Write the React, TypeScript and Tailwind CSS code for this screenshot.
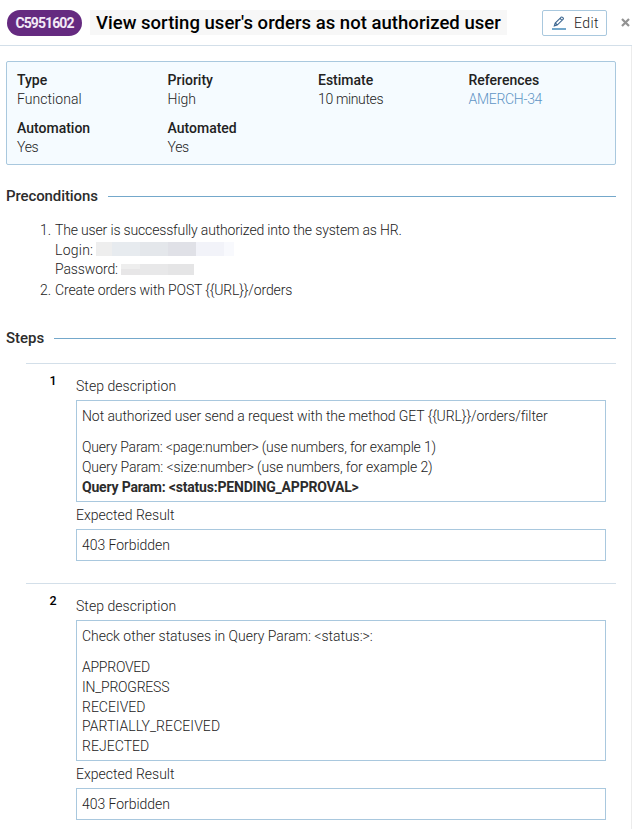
import type { ReactNode } from "react";

function Field({ label, value, link, valueClass }: { label: string; value: string; link?: boolean; valueClass: string }) {
  return (
    <div className="h-12 whitespace-nowrap">
      <div className="h-5 leading-5 font-medium">{label}</div>
      <div className={link ? "h-5 leading-[19px] text-[#5f95c5]" : "h-5 leading-[19px]"}><span className={valueClass}>{value}</span></div>
    </div>
  );
}

function Heading({ children }: { children: ReactNode }) {
  return (
    <h2 className="flex h-5 items-center gap-[10px] text-[15px] leading-5 font-medium whitespace-nowrap text-[#2c2c2c]">
      {children}
      <span className="h-px flex-1 bg-[#74a8cb]" />
    </h2>
  );
}

function Step({ number, children }: { number: string; children: ReactNode }) {
  return (
    <section className="ml-[26px] flex h-[220px] w-[590px] border-t border-[#d3dfe9]">
      <div className="w-[50px] pt-[9px] pl-[23.5px] text-[12.5px] leading-4 font-medium text-black">{number}</div>
      <div className="w-[530px] pt-3">
        <div className="h-6 leading-5"><span className="tracking-[0.05px]">Step description</span></div>
        {children}
      </div>
    </section>
  );
}

function Result() {
  return (
    <>
      <div className="h-[27px] leading-[26px]"><span className="tracking-normal">Expected Result</span></div>
      <div className="h-8 border border-[#a9c8de] pl-[5px] leading-[30px]"><span className="tracking-[-0.04px]">403 Forbidden</span></div>
    </>
  );
}

export default function App() {
  return (
    <div className="h-[829px] w-[632px] overflow-hidden bg-white font-[Roboto,'Liberation_Sans',sans-serif] text-[14px] font-light whitespace-nowrap text-[#222]">
      <header className="flex h-[46px] items-start border-b border-[#d3dfe9] pt-[10px] pl-[7px]">
        <div className="flex h-[26px] w-[75px] items-center justify-center rounded-full bg-[#652a80] text-[14px] font-bold text-[#f3eaf7]"><span className="tracking-[-0.9px]">C5951602</span></div>
        <h1 className="ml-2 h-[25px] w-[417px] bg-[#f7f7f7] pl-[6px] text-[18.5px] leading-[27px] font-medium text-black"><span className="tracking-[0.03px]">View sorting user's orders as not authorized user</span></h1>
        <button className="ml-[35px] flex h-[26px] w-[65px] items-center rounded-[2px] border border-[#a9c8de] pl-[9px] font-light">
          <svg width="14" height="14" viewBox="0 0 14 14" fill="none" className="mr-[8px]">
            <path d="M2.3 10 3.2 7 9 1.3Q9.8.7 10.6 1.4L11.1 1.9Q11.8 2.7 11 3.4L5.2 9.1ZM8 2.4 10 4.4M3.3 7 5.2 9" stroke="#3d668f" strokeWidth="1.1" />
            <path d="M0 13h14" stroke="#74a8cb" strokeWidth="2" />
          </svg>
          <span className="tracking-[0.4px]">Edit</span>
        </button>
        <svg width="9" height="9" viewBox="0 0 9 9" className="mt-[7.5px] ml-[13.5px]"><path d="m1 1 7 7m0-7-7 7" stroke="#929292" strokeWidth="2.2" /></svg>
      </header>
      <main className="h-[783px] w-[632px] border-r border-[#ececec] pt-[15px] pl-[6px]">
        <div className="grid h-[104px] w-[610px] grid-cols-[150.5px_150.5px_150.5px_1fr] content-start rounded-[2px] border border-[#a9c8de] bg-[#f5fbff] pt-2 pl-[10px]">
          <Field label="Type" value="Functional" valueClass="tracking-[0.05px]" />
          <Field label="Priority" value="High" valueClass="tracking-normal" />
          <Field label="Estimate" value="10 minutes" valueClass="tracking-[-0.35px]" />
          <Field label="References" value="AMERCH-34" link valueClass="tracking-[-0.3px]" />
          <Field label="Automation" value="Yes" valueClass="tracking-[-0.3px]" />
          <Field label="Automated" value="Yes" valueClass="tracking-[-0.3px]" />
        </div>
        <div className="mt-[21px] w-[610px]"><Heading><span className="tracking-[-0.1px]">Preconditions</span></Heading></div>
        <ol className="mt-[14px] h-[108px] pl-[34px]">
          <li className="flex">
            <span className="w-[15px] leading-5">1.</span>
            <div>
              <div className="h-5 leading-5"><span className="tracking-[-0.16px]">The user is successfully authorized into the system as HR.</span></div>
              <div className="flex h-[19px] leading-5">
                <span className="w-[41px] tracking-[0.25px]">Login:</span>
                <span className="mt-[2px] flex h-[14px]"><i className="w-4 bg-[#eeeeee]" /><i className="w-7 bg-[#e7ebef]" /><i className="w-7 bg-[#e4e7eb]" /><i className="w-7 bg-[#e0e1e7]" /><i className="w-7 bg-[#f2f3f9]" /><i className="w-[10px] bg-[#f8f9fd]" /></span>
              </div>
              <div className="flex h-[21px] leading-5">
                <span className="w-[66px] tracking-[-0.12px]">Password:</span>
                <span className="mt-[5px] flex h-[11px]"><i className="w-[19px] border-t-[5px] border-[#eeeeee] bg-[#e7e6e7]" /><i className="w-7 bg-[#e8e8e9]" /><i className="w-[26px] bg-[#e5e5e6]" /></span>
              </div>
            </div>
          </li>
          <li className="flex leading-5"><span className="w-[15px]">2.</span><span className="tracking-[-0.13px]">Create orders with POST {"{{URL}}"}/orders</span></li>
        </ol>
        <div className="w-[610px]"><Heading><span>Steps</span></Heading></div>
        <div className="mt-[15px] -ml-[6px]">
          <Step number="1">
            <div className="h-[102px] border border-[#a9c8de] pt-[5px] pl-[5px] leading-5">
              <p className="mb-[11px]"><span className="tracking-[-0.08px]">Not authorized user send a request with the method GET {"{{URL}}"}/orders/filter</span></p>
              <p className="h-5"><span className="tracking-[-0.18px]">Query Param: &lt;page:number&gt; (use numbers, for example 1)</span></p>
              <p className="h-5"><span className="tracking-[-0.13px]">Query Param: &lt;size:number&gt; (use numbers, for example 2)</span></p>
              <p className="font-bold text-[#2c2c2c]"><span className="tracking-[-0.19px]">Query Param: &lt;status:PENDING_APPROVAL&gt;</span></p>
            </div>
            <Result />
          </Step>
          <Step number="2">
            <div className="h-[141px] border border-[#a9c8de] pt-[5px] pl-[5px] leading-5">
              <p className="mb-[11px]"><span className="tracking-[-0.03px]">Check other statuses in Query Param: &lt;status:&gt;:</span></p>
              <p className="h-5"><span className="tracking-[-0.25px]">APPROVED</span></p>
              <p className="h-5"><span className="tracking-[-0.23px]">IN_PROGRESS</span></p>
              <p className="h-[19px]"><span className="tracking-normal">RECEIVED</span></p>
              <p className="h-5"><span className="tracking-[0.08px]">PARTIALLY_RECEIVED</span></p>
              <p><span className="tracking-[0.05px]">REJECTED</span></p>
            </div>
            <Result />
          </Step>
        </div>
      </main>
    </div>
  );
}
